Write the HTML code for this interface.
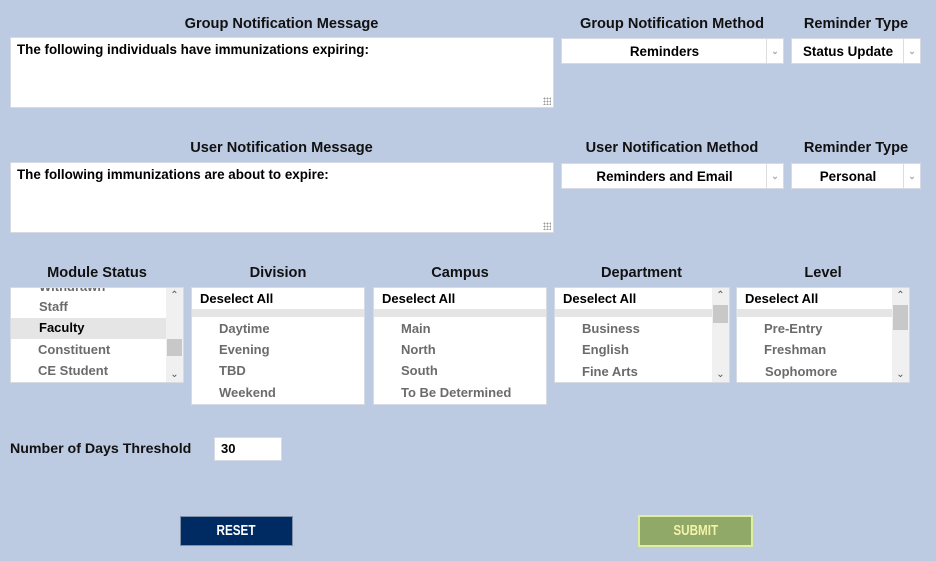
<!DOCTYPE html>
<html><head><style>
body{margin:0;width:936px;height:561px;background:#bccae2;font-family:"Liberation Sans",Arial,sans-serif;position:relative;overflow:hidden}
.a{position:absolute}
.h{position:absolute;font-weight:bold;font-size:14.6px;color:#111;text-align:center;white-space:nowrap}
.box{position:absolute;background:#fff;border:1px solid #d6dbe3;box-sizing:border-box}
.ta{font-size:13.4px;font-weight:bold;padding:4px 6px;color:#000}
.grip{position:absolute;right:2px;bottom:2px;width:8px;height:8px;background:radial-gradient(circle,#999 0.8px,transparent 1px) 0 0/3px 3px}
.sel{font-size:13.4px;font-weight:bold;color:#000}
.sel .t{position:absolute;left:0;top:1px;bottom:0;line-height:24px;text-align:center}
.sel .ar{position:absolute;right:0;top:0;bottom:0;width:16px;border-left:1px solid #ddd;color:#aaa;font-size:9px;text-align:center;line-height:24px}
.it{position:absolute;font-size:13px;font-weight:bold;color:#6b6b6b;white-space:nowrap}
.blk{color:#000}
.sb{position:absolute;top:0;bottom:0;right:0;width:17px;background:#f0f0f0}
.sb .u,.sb .d{position:absolute;left:0;width:17px;text-align:center;font-size:10px;color:#555}
.band{position:absolute;left:0;right:0;height:8px;background:#e5e5e5;top:21px}
.btn{position:absolute;box-sizing:border-box;font-weight:bold;font-size:15px;text-align:center;line-height:28px}
.btn span{display:inline-block;transform:scaleX(0.78)}
</style></head><body>
<div class="h" style="left:10px;width:543px;top:16px">Group Notification Message</div>
<div class="h" style="left:561px;width:222px;top:16px">Group Notification Method</div>
<div class="h" style="left:791px;width:130px;top:16px">Reminder Type</div>
<div class="box ta" style="left:10px;top:37px;width:544px;height:71px">The following individuals have immunizations expiring:<div class="grip"></div></div>
<div class="box sel" style="left:561px;top:38px;width:223px;height:26px"><div class="t" style="right:16px">Reminders</div><div class="ar">&#8964;</div></div>
<div class="box sel" style="left:791px;top:38px;width:130px;height:26px"><div class="t" style="right:16px">Status Update</div><div class="ar">&#8964;</div></div>

<div class="h" style="left:10px;width:543px;top:140px">User Notification Message</div>
<div class="h" style="left:561px;width:222px;top:140px">User Notification Method</div>
<div class="h" style="left:791px;width:130px;top:140px">Reminder Type</div>
<div class="box ta" style="left:10px;top:162px;width:544px;height:71px">The following immunizations are about to expire:<div class="grip"></div></div>
<div class="box sel" style="left:561px;top:163px;width:223px;height:26px"><div class="t" style="right:16px">Reminders and Email</div><div class="ar">&#8964;</div></div>
<div class="box sel" style="left:791px;top:163px;width:130px;height:26px"><div class="t" style="right:16px">Personal</div><div class="ar">&#8964;</div></div>

<div class="h" style="left:10px;width:174px;top:265px">Module Status</div>
<div class="h" style="left:191px;width:174px;top:265px">Division</div>
<div class="h" style="left:373px;width:174px;top:265px">Campus</div>
<div class="h" style="left:554px;width:175px;top:265px">Department</div>
<div class="h" style="left:736px;width:174px;top:265px">Level</div>

<div class="box" style="left:10px;top:287px;width:174px;height:96px;overflow:hidden">
<div class="it" style="left:28px;top:-9px">Withdrawn</div>
<div class="it" style="left:28px;top:11px">Staff</div>
<div class="a" style="left:0;top:30px;width:156px;height:21px;background:#e5e5e5"></div>
<div class="it blk" style="left:28px;top:32px">Faculty</div>
<div class="it" style="left:27px;top:54px">Constituent</div>
<div class="it" style="left:27px;top:75px">CE Student</div>
<div class="sb"><div class="u" style="top:2px">&#8963;</div><div class="a" style="left:1px;top:51px;width:15px;height:17px;background:#c8c8c8"></div><div class="d" style="bottom:2px">&#8964;</div></div>
</div>

<div class="box" style="left:191px;top:287px;width:174px;height:118px;overflow:hidden">
<div class="it blk" style="left:8px;top:3px">Deselect All</div><div class="band"></div>
<div class="it" style="left:27px;top:33px">Daytime</div>
<div class="it" style="left:27px;top:54px">Evening</div>
<div class="it" style="left:27px;top:75px">TBD</div>
<div class="it" style="left:27px;top:97px">Weekend</div>
</div>

<div class="box" style="left:373px;top:287px;width:174px;height:118px;overflow:hidden">
<div class="it blk" style="left:8px;top:3px">Deselect All</div><div class="band"></div>
<div class="it" style="left:27px;top:33px">Main</div>
<div class="it" style="left:27px;top:54px">North</div>
<div class="it" style="left:27px;top:75px">South</div>
<div class="it" style="left:27px;top:97px">To Be Determined</div>
</div>

<div class="box" style="left:554px;top:287px;width:176px;height:96px;overflow:hidden">
<div class="it blk" style="left:8px;top:3px">Deselect All</div><div class="band" style="right:17px"></div>
<div class="it" style="left:27px;top:33px">Business</div>
<div class="it" style="left:27px;top:54px">English</div>
<div class="it" style="left:27px;top:76px">Fine Arts</div>
<div class="sb"><div class="u" style="top:2px">&#8963;</div><div class="a" style="left:1px;top:17px;width:15px;height:18px;background:#c8c8c8"></div><div class="d" style="bottom:2px">&#8964;</div></div>
</div>

<div class="box" style="left:736px;top:287px;width:174px;height:96px;overflow:hidden">
<div class="it blk" style="left:8px;top:3px">Deselect All</div><div class="band" style="right:17px"></div>
<div class="it" style="left:27px;top:33px">Pre-Entry</div>
<div class="it" style="left:27px;top:54px">Freshman</div>
<div class="it" style="left:28px;top:76px">Sophomore</div>
<div class="sb"><div class="u" style="top:2px">&#8963;</div><div class="a" style="left:1px;top:17px;width:15px;height:25px;background:#c8c8c8"></div><div class="d" style="bottom:2px">&#8964;</div></div>
</div>

<div class="h" style="left:10px;top:441px;font-size:14.2px">Number of Days Threshold</div>
<div class="box" style="left:214px;top:437px;width:68px;height:24px;font-size:13px;font-weight:bold;padding:3px 6px">30</div>

<div class="btn" style="left:180px;top:516px;width:113px;height:30px;background:#002b62;border:1px solid #8090a8;color:#fff"><span>RESET</span></div>
<div class="btn" style="left:638px;top:515px;width:115px;height:32px;background:#90a868;border:2px solid #dfeea0;color:#f2f2a8"><span>SUBMIT</span></div>
</body></html>
